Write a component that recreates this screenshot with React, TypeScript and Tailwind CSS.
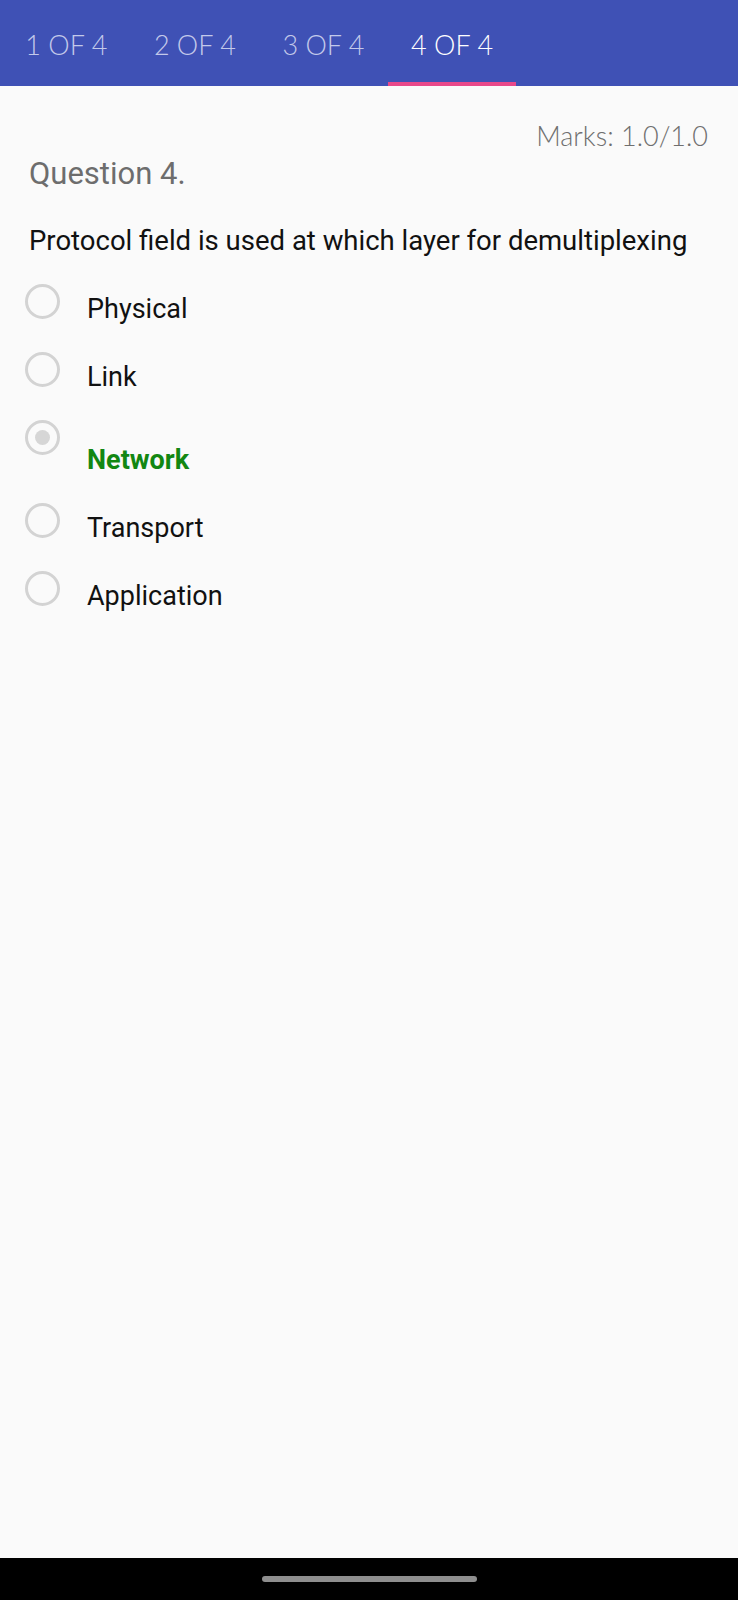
import React from "react";

const tabs = ["1 OF 4", "2 OF 4", "3 OF 4", "4 OF 4"];

const options: { label: string; selected?: boolean }[] = [
  { label: "Physical" },
  { label: "Link" },
  { label: "Network", selected: true },
  { label: "Transport" },
  { label: "Application" },
];

function Radio({ selected }: { selected?: boolean }) {
  return (
    <div className="w-[35px] h-[35px] shrink-0 rounded-full border-[3px] border-[#d3d3d3] flex items-center justify-center">
      {selected && <div className="w-[15px] h-[15px] rounded-full bg-[#d6d6d6]" />}
    </div>
  );
}

export default function App() {
  return (
    <div className="w-[738px] h-[1600px] flex flex-col bg-[#fafafa] overflow-hidden">
      <header className="h-[86px] shrink-0 bg-[#3f51b5] flex pl-[2px]">
        {tabs.map((t, i) => {
          const active = i === 3;
          return (
            <div key={t} className="w-[128.6px] flex flex-col">
              <div
                className={`h-[82px] flex items-center justify-center pt-[7px] text-[27px] leading-[34px] font-light ${
                  active ? "text-white" : "text-[#c3c9ea]"
                }`}
                style={{ fontFamily: "Lato, 'Open Sans', sans-serif" }}
              >
                {t}
              </div>
              <div className={`h-[4px] ${active ? "bg-[#e8488a]" : ""}`} />
            </div>
          );
        })}
      </header>

      <main className="flex-1 flex flex-col pt-[34px]" style={{ fontFamily: "Roboto, 'Liberation Sans', sans-serif" }}>
        <div
          className="self-end pr-[30px] text-[27px] leading-[32px] font-light text-[#6f6f6f]"
          style={{ fontFamily: "Lato, 'Open Sans', sans-serif" }}
        >
          Marks: 1.0/1.0
        </div>
        <div className="pl-[29px] mt-[4px] text-[31px] leading-[36px] text-[#6d6d6d]">Question 4.</div>
        <div className="pl-[29px] mt-[33px] text-[27.5px] leading-[32px] text-[#111111]">
          Protocol field is used at which layer for demultiplexing
        </div>
        <div className="flex flex-col mt-[27px] pl-[25px] gap-[27px]">
          {options.map((o) => (
            <div key={o.label} className="flex items-start">
              <Radio selected={o.selected} />
              <div
                className={`ml-[27px] text-[27px] leading-[32px] ${
                  o.selected ? "pt-[23.5px] font-bold text-[#128712]" : "pt-[9px] text-[#111111]"
                }`}
              >
                {o.label}
              </div>
            </div>
          ))}
        </div>
      </main>

      <div className="h-[42px] shrink-0 bg-black flex items-center justify-center">
        <div className="w-[215px] h-[6px] rounded-full bg-[#8e8e8e]" />
      </div>
    </div>
  );
}
